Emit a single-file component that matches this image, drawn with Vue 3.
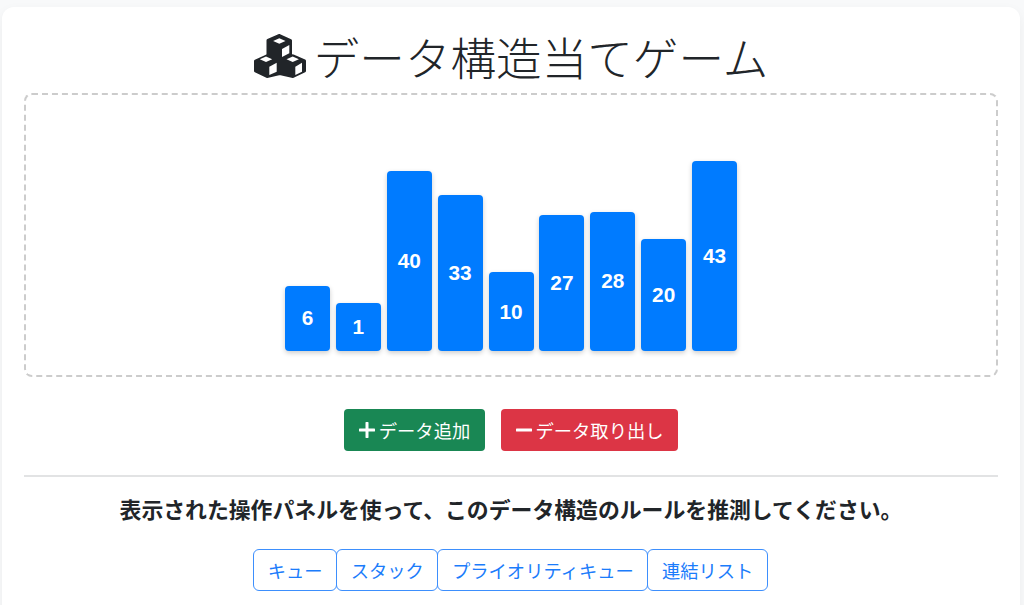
<script setup>
const values = [6, 1, 40, 33, 10, 27, 28, 20, 43]
const answers = ['キュー', 'スタック', 'プライオリティキュー', '連結リスト']

const barHeight = (v) => 44.8 + v * 3.38 + 'px'
</script>

<template>
  <div class="page">
    <main class="card">
      <h1 class="title">
        <svg class="title-icon" viewBox="0 0 52 46" aria-hidden="true">
          <polygon class="cube-body" points="25.5,1.5 36.5,6.5 36.5,21.5 39,22 50.5,27 50.5,37 39,42.5 25.8,39.5 13,42.5 1.5,37 1.5,27 12.5,22 14,21.5 14,6.5" />
          <polygon class="cube-face" points="25.3,4.2 31.5,7 25.3,9.8 19.1,7" />
          <polygon class="cube-face" points="28,15 35.3,11 35.3,19.3 28,23" />
          <polygon class="cube-face" points="12,22.5 18.2,25.3 12,28.1 5.8,25.3" />
          <polygon class="cube-face" points="15.3,32.7 22.7,28.7 22.7,37.7 15.3,41" />
          <polygon class="cube-face" points="38.7,22.5 44.9,25.3 38.7,28.1 32.5,25.3" />
          <polygon class="cube-face" points="41.3,32.7 48,28.7 48,37.7 41.3,41" />
        </svg>
        データ構造当てゲーム
      </h1>

      <section class="visualizer">
        <div v-for="(v, i) in values" :key="i" class="bar" :style="{ height: barHeight(v) }">{{ v }}</div>
      </section>

      <div class="controls">
        <button class="btn btn-add">
          <svg class="btn-icon" viewBox="0 0 16 16" aria-hidden="true">
            <path d="M8 1v14M1 8h14" stroke="currentColor" stroke-width="3" stroke-linecap="round" />
          </svg>
          データ追加
        </button>
        <button class="btn btn-remove">
          <svg class="btn-icon" viewBox="0 0 16 16" aria-hidden="true">
            <path d="M1 8h14" stroke="currentColor" stroke-width="3" stroke-linecap="round" />
          </svg>
          データ取り出し
        </button>
      </div>

      <hr class="divider" />

      <p class="prompt">表示された操作パネルを使って、このデータ構造のルールを推測してください。</p>

      <div class="answers">
        <button v-for="a in answers" :key="a" class="answer">{{ a }}</button>
      </div>
    </main>
  </div>
</template>

<style>
html,
body {
  margin: 0;
  height: 100%;
  overflow: hidden;
  background: #f8f9fa;
}
</style>

<style scoped>
.page {
  height: 605px;
  overflow: hidden;
  padding: 7px 4px 0 2px;
  box-sizing: border-box;
  font-family: "Noto Sans CJK JP", "Liberation Sans", sans-serif;
  color: #212529;
}

.card {
  background: #fff;
  border-radius: 12px;
  box-shadow: 0 4px 12px rgba(0, 0, 0, 0.05);
  padding: 20px 22px 40px;
  height: 700px;
  box-sizing: border-box;
}

.title {
  display: flex;
  align-items: center;
  justify-content: center;
  gap: 8px;
  margin: 0 0 7px;
  height: 59px;
  font-size: 45.6px;
  font-weight: 300;
  line-height: 59px;
  white-space: nowrap;
}

.title-icon {
  width: 52px;
  height: 46px;
  flex: none;
}

.cube-body {
  fill: currentColor;
  stroke: currentColor;
  stroke-width: 3;
  stroke-linejoin: round;
}

.cube-face {
  fill: #fff;
}

.visualizer {
  display: flex;
  align-items: flex-end;
  justify-content: center;
  gap: 5.9px;
  height: 284px;
  box-sizing: border-box;
  padding-bottom: 24px;
  border: 2px dashed #ccc;
  border-radius: 8px;
}

.bar {
  width: 45px;
  display: flex;
  align-items: center;
  justify-content: center;
  background: #007bff;
  border-radius: 4px;
  box-shadow: 0 2px 5px rgba(0, 0, 0, 0.2);
  color: #fff;
  font-family: "Liberation Sans", Arial, sans-serif;
  font-size: 20.8px;
  font-weight: 700;
}

.controls {
  display: flex;
  justify-content: center;
  gap: 16px;
  margin-top: 32px;
}

.btn {
  display: flex;
  align-items: center;
  justify-content: center;
  gap: 4px;
  width: 141px;
  height: 42px;
  padding: 0;
  border: 1px solid transparent;
  border-radius: 4px;
  color: #fff;
  font-family: inherit;
  font-size: 18.3px;
}

.btn-remove {
  width: 177px;
}

.btn-add {
  background: #198754;
}

.btn-remove {
  background: #dc3545;
}

.btn-icon {
  width: 16px;
  height: 16px;
  flex: none;
}

.divider {
  margin: 24px 0 0;
  border: 0;
  border-top: 2px solid #e2e3e4;
}

.prompt {
  margin: 19px 0 0;
  text-align: center;
  font-size: 21.85px;
  font-weight: 700;
  line-height: 26px;
}

.answers {
  display: flex;
  justify-content: center;
  margin-top: 27px;
}

.answer {
  height: 42px;
  padding: 0 13.6px;
  margin-left: -1px;
  background: #fff;
  border: 1px solid #3d8ffd;
  border-radius: 6px;
  color: #1b7cfb;
  font-family: inherit;
  font-size: 18.3px;
}
</style>
